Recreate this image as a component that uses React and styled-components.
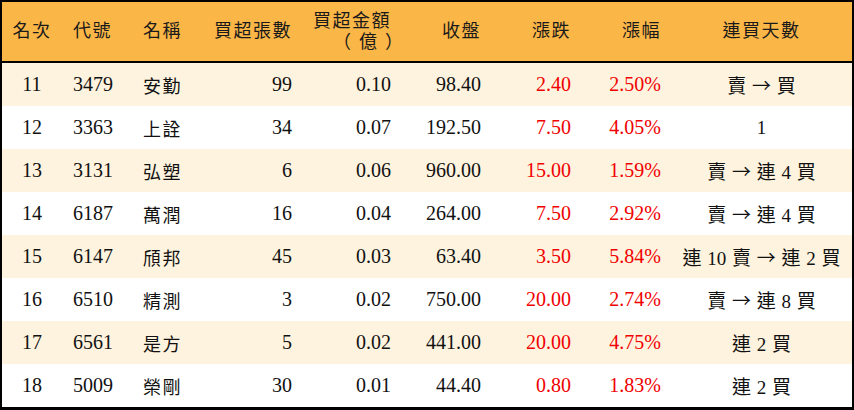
import React from "react";
import styled, { createGlobalStyle } from "styled-components";

const GlobalStyle = createGlobalStyle`
  html, body {
    margin: 0;
    padding: 0;
    background: #fff;
  }
  body {
    font-family: "Liberation Serif", "Noto Sans CJK TC", serif;
  }
`;

const COLUMNS = "60px 70px 70px 100px 99px 90px 90px 90px 181px";

const Table = styled.div`
  width: 854px;
  height: 410px;
  box-sizing: border-box;
  border: 2px solid #000;
  border-bottom-width: 3px;
  display: flex;
  flex-direction: column;
  color: #111;
`;

const HeadRow = styled.div`
  display: grid;
  grid-template-columns: ${COLUMNS};
  height: 59px;
  background: #fab647;
  border-bottom: 2px solid #000;
`;

const Row = styled.div`
  display: grid;
  grid-template-columns: ${COLUMNS};
  height: 43px;
  background: ${(p) => (p.$odd ? "#fef3de" : "#ffffff")};
`;

const justifyMap = { left: "flex-start", right: "flex-end", center: "center" };

const HeadCell = styled.div`
  display: flex;
  flex-direction: column;
  justify-content: center;
  align-items: ${(p) => justifyMap[p.$align || "left"]};
  padding: ${(p) => (p.$align === "right" ? "0 10px 0 0" : p.$align === "center" ? "0" : "0 0 0 11px")};
  font-size: 18px;
  letter-spacing: 1.5px;
  line-height: 21px;
  color: #1a1a1a;
`;

const SubLine = styled.span`
  letter-spacing: 8px;
  margin-right: -20px;
`;

const Cell = styled.div`
  display: flex;
  align-items: center;
  justify-content: ${(p) => justifyMap[p.$align || "left"]};
  padding: ${(p) => (p.$align === "right" ? "0 10px 0 0" : p.$align === "center" ? "0" : "0 0 0 11px")};
  font-size: 20px;
  color: ${(p) => (p.$red ? "#f00000" : "#111")};
  white-space: nowrap;
`;

const Name = styled.span`
  font-size: 18px;
  letter-spacing: 1.5px;
`;

const Streak = styled.span`
  font-size: 19px;
  word-spacing: 1px;
`;

const Arrow = styled.span`
  font-family: "Noto Sans CJK TC", sans-serif;
  font-size: 19px;
`;

const rows = [
  ["11", "3479", "安勤", "99", "0.10", "98.40", "2.40", "2.50%", "賣 → 買"],
  ["12", "3363", "上詮", "34", "0.07", "192.50", "7.50", "4.05%", "1"],
  ["13", "3131", "弘塑", "6", "0.06", "960.00", "15.00", "1.59%", "賣 → 連 4 買"],
  ["14", "6187", "萬潤", "16", "0.04", "264.00", "7.50", "2.92%", "賣 → 連 4 買"],
  ["15", "6147", "頎邦", "45", "0.03", "63.40", "3.50", "5.84%", "連 10 賣 → 連 2 買"],
  ["16", "6510", "精測", "3", "0.02", "750.00", "20.00", "2.74%", "賣 → 連 8 買"],
  ["17", "6561", "是方", "5", "0.02", "441.00", "20.00", "4.75%", "連 2 買"],
  ["18", "5009", "榮剛", "30", "0.01", "44.40", "0.80", "1.83%", "連 2 買"],
];

// split the streak text so the arrow gets the wide CJK glyph
const renderStreak = (text) => {
  const parts = text.split("→");
  return parts.map((part, i) => (
    <React.Fragment key={i}>
      {i > 0 && <Arrow>→</Arrow>}
      {part}
    </React.Fragment>
  ));
};

export default function App() {
  return (
    <>
      <GlobalStyle />
      <Table>
        <HeadRow>
          <HeadCell $align="center">名次</HeadCell>
          <HeadCell>代號</HeadCell>
          <HeadCell>名稱</HeadCell>
          <HeadCell $align="right">買超張數</HeadCell>
          <HeadCell $align="right">
            <span>買超金額</span>
            <SubLine>（億）</SubLine>
          </HeadCell>
          <HeadCell $align="right">收盤</HeadCell>
          <HeadCell $align="right">漲跌</HeadCell>
          <HeadCell $align="right">漲幅</HeadCell>
          <HeadCell $align="center">連買天數</HeadCell>
        </HeadRow>
        {rows.map((r, i) => (
          <Row key={r[0]} $odd={i % 2 === 0}>
            <Cell $align="center">{r[0]}</Cell>
            <Cell>{r[1]}</Cell>
            <Cell>
              <Name>{r[2]}</Name>
            </Cell>
            <Cell $align="right">{r[3]}</Cell>
            <Cell $align="right">{r[4]}</Cell>
            <Cell $align="right">{r[5]}</Cell>
            <Cell $align="right" $red>{r[6]}</Cell>
            <Cell $align="right" $red>{r[7]}</Cell>
            <Cell $align="center">
              <Streak>{renderStreak(r[8])}</Streak>
            </Cell>
          </Row>
        ))}
      </Table>
    </>
  );
}
